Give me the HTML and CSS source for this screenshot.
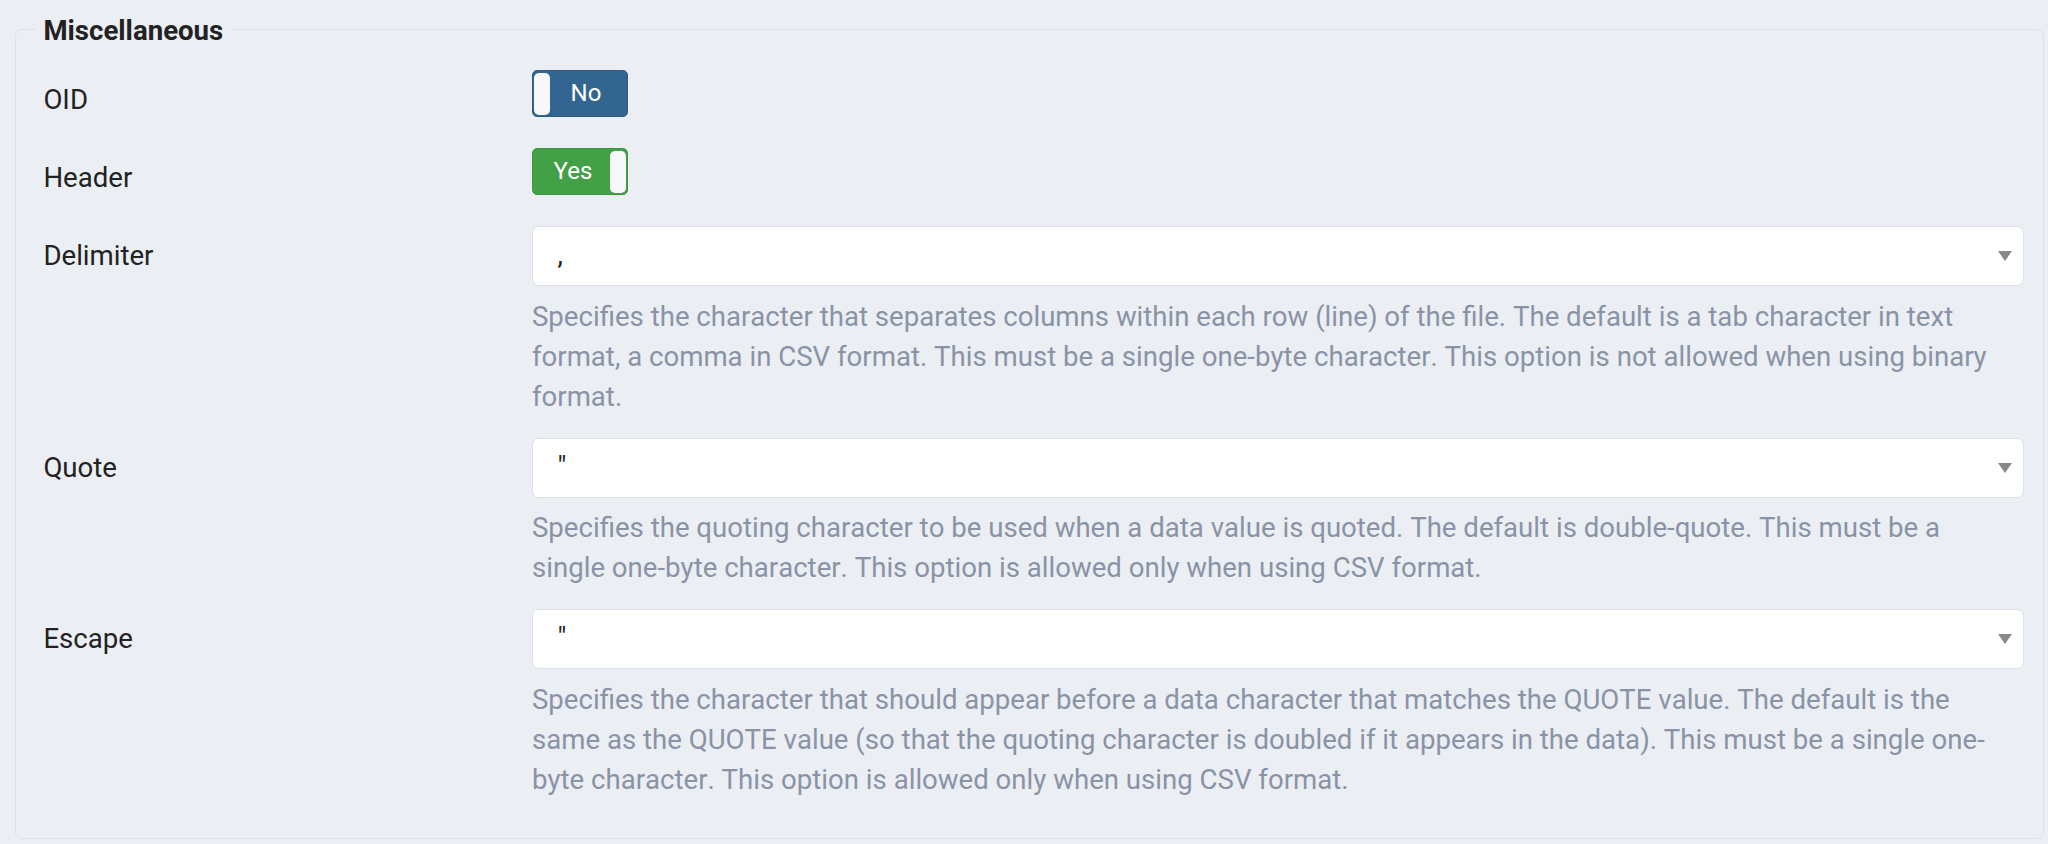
FILE: index.html
```html
<!DOCTYPE html>
<html lang="en">
<head>
<meta charset="utf-8">
<title>Miscellaneous</title>
<link rel="stylesheet" href="styles.css">
</head>
<body>
<fieldset class="group">
  <legend class="group-title">Miscellaneous</legend>

  <div class="row">
    <label class="row-label">OID</label>
    <div class="row-control">
      <div class="toggle toggle-off">
        <span class="knob"></span>
        <span class="toggle-text">No</span>
      </div>
    </div>
  </div>

  <div class="row">
    <label class="row-label">Header</label>
    <div class="row-control">
      <div class="toggle toggle-on">
        <span class="toggle-text">Yes</span>
        <span class="knob"></span>
      </div>
    </div>
  </div>

  <div class="row">
    <label class="row-label">Delimiter</label>
    <div class="row-control">
      <div class="select">
        <span class="select-value">,</span>
        <span class="select-arrow"></span>
      </div>
      <p class="hint">Specifies the character that separates columns within each row (line) of the file. The default is a tab character in text format, a comma in CSV format. This must be a single one-byte character. This option is not allowed when using binary format.</p>
    </div>
  </div>

  <div class="row">
    <label class="row-label">Quote</label>
    <div class="row-control">
      <div class="select">
        <span class="select-value">"</span>
        <span class="select-arrow"></span>
      </div>
      <p class="hint">Specifies the quoting character to be used when a data value is quoted. The default is double-quote. This must be a single one-byte character. This option is allowed only when using CSV format.</p>
    </div>
  </div>

  <div class="row">
    <label class="row-label">Escape</label>
    <div class="row-control">
      <div class="select">
        <span class="select-value">"</span>
        <span class="select-arrow"></span>
      </div>
      <p class="hint">Specifies the character that should appear before a data character that matches the QUOTE value. The default is the same as the QUOTE value (so that the quoting character is doubled if it appears in the data). This must be a single one-byte character. This option is allowed only when using CSV format.</p>
    </div>
  </div>
</fieldset>
</body>
</html>
```

FILE: styles.css
```css
* {
  box-sizing: border-box;
}

html,
body {
  margin: 0;
  background: #ebeef3;
}

body {
  padding: 9px 4px 0 15px;
  font-family: Roboto, "Noto Sans", "Liberation Sans", sans-serif;
  font-size: 27.6px;
  color: #222222;
}

.group {
  margin: 0;
  min-width: 0;
  border: 1px solid #dde0e6;
  border-radius: 7px;
  padding: 21px 19px 17.5px 27.4px;
}

.group-title {
  font-weight: 700;
  line-height: 36px;
  padding: 4px 8px 0;
  margin-left: -8px;
  color: #222222;
}

.row {
  display: grid;
  grid-template-columns: 488.6px 1fr;
  margin-bottom: 18px;
}

.row-label {
  line-height: 60px;
  color: #222222;
}

.row-control {
  min-width: 0;
}

/* toggle switch */
.toggle {
  width: 96px;
  height: 47px;
  border-radius: 5px;
  border: 1px solid;
  display: flex;
  align-items: center;
  padding: 0 1px;
  font-size: 24px;
  color: #ffffff;
}

.toggle-off {
  background: #326690;
  border-color: #2b5c84;
}

.toggle-on {
  background: #43a047;
  border-color: #3c9840;
}

.knob {
  width: 16px;
  height: 42px;
  border-radius: 5px;
  background: #f6f8fb;
  flex: none;
}

.toggle-text {
  flex: 1;
  text-align: center;
  line-height: 45px;
}

.toggle-off .toggle-text {
  padding-right: 4px;
}

.toggle-on .toggle-text {
  padding-left: 2px;
}

/* select */
.select {
  height: 60px;
  background: #ffffff;
  border: 1px solid #dde0e6;
  border-radius: 7px;
  display: flex;
  align-items: center;
  padding: 0 11px 2px 24.5px;
}

.select-value {
  flex: 1;
  line-height: 40px;
  color: #222222;
}

.select-arrow {
  width: 0;
  height: 0;
  margin-top: 2px;
  border-left: 7.5px solid transparent;
  border-right: 7.5px solid transparent;
  border-top: 10px solid #888888;
}

.hint {
  margin: 10.5px 0 3px;
  padding-right: 12px;
  line-height: 40px;
  color: #8a93a6;
  font-kerning: none;
}
```
